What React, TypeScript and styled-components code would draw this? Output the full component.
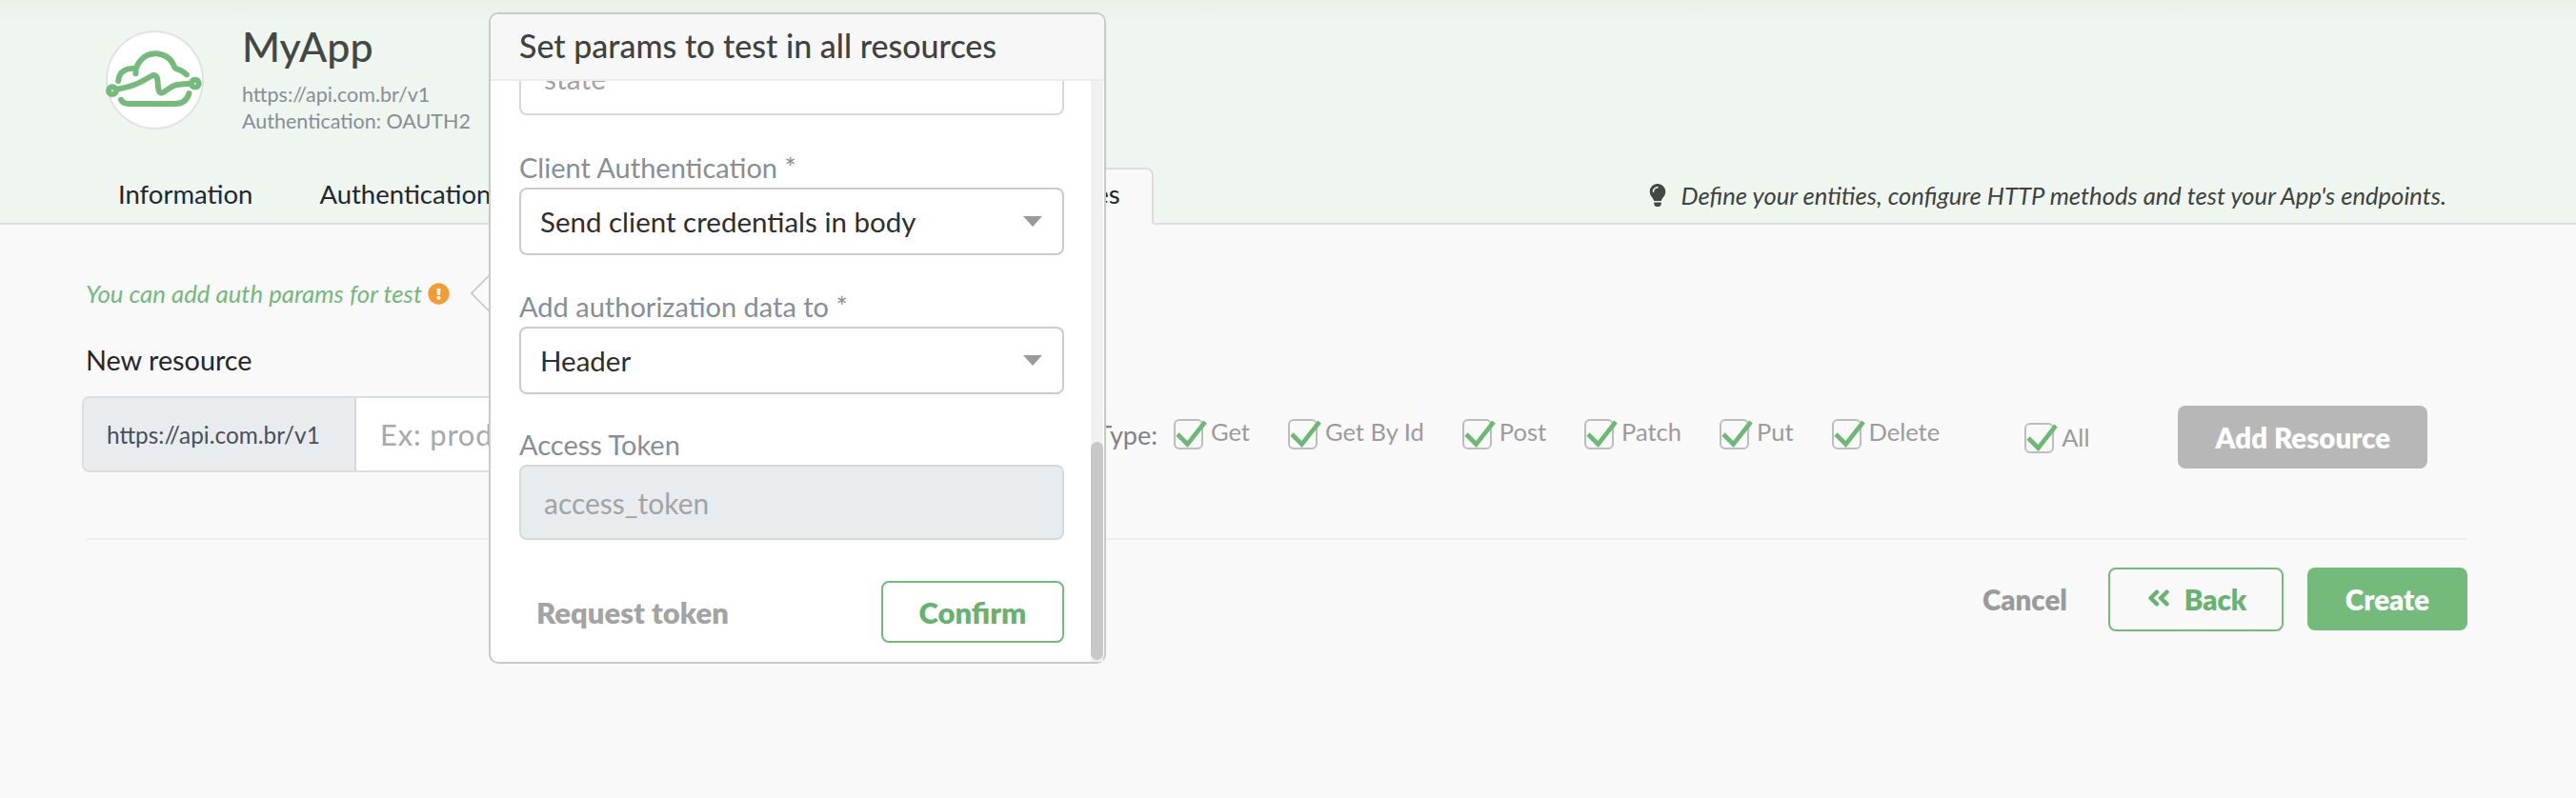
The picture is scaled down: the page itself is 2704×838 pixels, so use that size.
import React from "react";
import styled, { createGlobalStyle } from "styled-components";
import { FaAngleDoubleLeft, FaExclamationCircle, FaLightbulb } from "react-icons/fa";

const Global = createGlobalStyle`
  html, body { margin: 0; padding: 0; background: #f9f9f9; }
  * { box-sizing: border-box; }
`;

const Page = styled.div`
  position: relative;
  width: 2704px;
  height: 838px;
  overflow: hidden;
  background: #f9f9f9;
  font-family: Lato, "Open Sans", sans-serif;
`;

const Header = styled.header`
  height: 236px;
  display: flex;
  flex-direction: column;
  background: linear-gradient(#e9f1e9 0, #eff5ef 24px);
  border-bottom: 2px solid #dddddd;
`;

const Brand = styled.div`
  display: flex;
  padding: 32px 0 0 111px;
`;

const LogoCircle = styled.div`
  width: 103px;
  height: 104px;
  border-radius: 50%;
  background: #fff;
  border: 2px solid #e2e2e2;
  flex: none;
`;

const BrandText = styled.div`
  margin-left: 40px;
  display: flex;
  flex-direction: column;
`;

const Title = styled.h1`
  margin: -7px 0 0;
  font-size: 43px;
  line-height: 48px;
  font-weight: 500;
  color: #444844;
`;

const Meta = styled.div`
  font-size: 21.5px;
  line-height: 28px;
  color: #868e96;
  &:first-of-type { margin-top: 12px; }
`;

const TabRow = styled.nav`
  margin-top: auto;
  display: flex;
  align-items: flex-end;
  padding-left: 89px;
  padding-right: 136px;
  margin-bottom: -2px;
`;

const Tab = styled.div<{ $active?: boolean; $offset?: number }>`
  height: 60px;
  padding: 0 33px;
  font-size: 27.5px;
  line-height: 52px;
  color: #23272b;
  margin-left: ${(p) => p.$offset ?? 0}px;
  border: 2px solid ${(p) => (p.$active ? "#dddddd" : "transparent")};
  border-bottom-color: ${(p) => (p.$active ? "#f9f9f9" : "transparent")};
  border-radius: 8px 8px 0 0;
  background: ${(p) => (p.$active ? "#f9f9f9" : "transparent")};
`;

const Hint = styled.div`
  margin-left: auto;
  height: 60px;
  padding-bottom: 2px;
  display: flex;
  align-items: center;
  gap: 14px;
  font-size: 25.6px;
  font-style: italic;
  color: #3e423e;
  svg { color: #444844; width: 20px; height: 24px; }
`;

const Main = styled.main`
  padding: 57px 114px 0 86px;
`;

const Note = styled.div`
  display: flex;
  align-items: center;
  gap: 6px;
  padding-left: 4px;
  height: 30px;
  font-size: 25.8px;
  font-style: italic;
  color: #72b97a;
  svg { color: #f39c35; width: 23px; height: 23px; }
`;

const SectionLabel = styled.div`
  margin-top: 38px;
  padding-left: 4px;
  font-size: 28.8px;
  line-height: 34px;
  color: #23272b;
`;

const ResourceRow = styled.div`
  margin-top: 21px;
  display: flex;
  align-items: center;
  height: 80px;
`;

const InputGroup = styled.div`
  width: 950px;
  height: 80px;
  display: flex;
  border: 2px solid #dcdfe1;
  border-radius: 8px;
  overflow: hidden;
  flex: none;
`;

const Prefix = styled.div`
  width: 286px;
  flex: none;
  padding-left: 24px;
  display: flex;
  align-items: center;
  background: #e9ecef;
  border-right: 2px solid #d4d6d8;
  font-size: 24.4px;
  color: #495057;
`;

const PathInput = styled.input`
  flex: 1;
  min-width: 0;
  border: 0;
  background: #fff;
  padding-left: 25px;
  font-family: Lato, sans-serif;
  font-size: 31px;
  letter-spacing: 0.8px;
  &::placeholder { color: #a8a8a8; }
`;

const TypeLabel = styled.div`
  margin-left: 14px;
  width: 165px;
  flex: none;
  white-space: nowrap;
  font-size: 27px;
  color: #7d8389;
  text-align: right;
`;

const Checks = styled.div`
  margin-left: 17px;
  display: flex;
  gap: 40px;
  flex: none;
  margin-top: -1px;
`;

const CheckItem = styled.label<{ $lower?: boolean }>`
  display: flex;
  align-items: center;
  gap: 8px;
  font-size: 25.5px;
  line-height: 30px;
  white-space: nowrap;
  color: #9b9b9b;
  margin-left: ${(p) => (p.$lower ? 49 : 0)}px;
  transform: translateY(${(p) => (p.$lower ? 4 : 0)}px);
  & > span:last-child { transform: translateY(${(p) => (p.$lower ? -1 : -3)}px); }
`;

const Box = styled.span`
  position: relative;
  width: 31px;
  height: 32px;
  flex: none;
  border: 2px solid #bdbdbd;
  border-radius: 6px;
  svg { position: absolute; left: -2px; top: -2px; overflow: visible; }
`;

const AddButton = styled.button`
  margin-left: 93px;
  margin-top: 6px;
  width: 262px;
  height: 66px;
  flex: none;
  border: 0;
  border-radius: 8px;
  background: #b7b7b7;
  color: #fff;
  font-family: Lato, sans-serif;
  font-weight: 800;
  font-size: 29.5px;
`;

const Rule = styled.hr`
  margin: 69px 0 0 4px;
  border: 0;
  border-top: 2px solid #eceef0;
`;

const Actions = styled.div`
  margin-top: 29px;
  display: flex;
  justify-content: flex-end;
  align-items: flex-start;
`;

const CancelButton = styled.button`
  border: 0;
  background: transparent;
  padding: 0;
  margin-right: 43px;
  height: 66px;
  color: #9b9b9b;
  font-family: Lato, sans-serif;
  font-weight: 800;
  font-size: 29.5px;
`;

const BackButton = styled.button`
  width: 184px;
  height: 67px;
  margin-right: 25px;
  border: 2px solid #74ba7b;
  border-radius: 8px;
  background: transparent;
  color: #68b271;
  font-family: Lato, sans-serif;
  font-weight: 800;
  font-size: 29.5px;
  display: flex;
  align-items: center;
  justify-content: center;
  gap: 13px;
  svg { width: 28px; height: 28px; margin-top: -4px; }
`;

const CreateButton = styled.button`
  width: 168px;
  height: 66px;
  border: 0;
  border-radius: 8px;
  background: #74ba7b;
  color: #fff;
  font-family: Lato, sans-serif;
  font-weight: 800;
  font-size: 29.5px;
`;

const Popover = styled.aside`
  position: absolute;
  left: 513px;
  top: 13px;
  width: 648px;
  height: 684px;
  display: flex;
  flex-direction: column;
  background: #fff;
  border: 2px solid #c6cbc6;
  border-radius: 10px;
`;

const Arrow = styled.div`
  position: absolute;
  left: -16px;
  top: 279px;
  width: 28px;
  height: 28px;
  transform: rotate(45deg);
  background: #fafafa;
  border-left: 2px solid #c6cbc6;
  border-bottom: 2px solid #c6cbc6;
  clip-path: polygon(0 0, 100% 100%, 0 100%);
`;

const PopoverHead = styled.div`
  height: 70px;
  flex: none;
  padding: 0 0 4px 30px;
  display: flex;
  align-items: center;
  background: #f7f7f7;
  border-bottom: 2px solid #ececec;
  border-radius: 8px 8px 0 0;
  font-size: 34px;
  font-weight: 500;
  color: #3f4240;
`;

const PopoverBody = styled.div`
  flex: 1;
  min-height: 0;
  display: flex;
  overflow: hidden;
`;

const Form = styled.div`
  flex: 1;
  min-width: 0;
  padding: 0 28px 0 30px;
  margin-top: -43px;
  display: flex;
  flex-direction: column;
`;

const FieldLabel = styled.div<{ $gap: number }>`
  margin-top: ${(p) => p.$gap}px;
  height: 34px;
  margin-bottom: 4px;
  font-size: 29px;
  line-height: 34px;
  color: #868e96;
`;

const TextField = styled.div<{ $disabled?: boolean }>`
  height: 79px;
  padding-left: 24px;
  display: flex;
  align-items: center;
  flex: none;
  border: 2px solid #d8d8d8;
  border-radius: 8px;
  background: ${(p) => (p.$disabled ? "#e9ecef" : "#fff")};
  font-size: 30px;
  color: #a3a3a3;
`;

const SelectField = styled.div`
  height: 71px;
  flex: none;
  padding: 0 22px 0 20px;
  display: flex;
  align-items: center;
  justify-content: space-between;
  border: 2px solid #cbcbcb;
  border-radius: 8px;
  font-size: 29.5px;
  color: #2c2e30;
  &::after {
    content: "";
    border-left: 10px solid transparent;
    border-right: 10px solid transparent;
    border-top: 11px solid #9a9a9a;
    margin-right: -1px;
  }
`;

const FormActions = styled.div`
  margin-top: 43px;
  display: flex;
  justify-content: space-between;
  align-items: center;
`;

const RequestButton = styled.button`
  margin-left: 18px;
  border: 0;
  padding: 0;
  background: transparent;
  color: #a3a3a3;
  font-family: Lato, sans-serif;
  font-weight: 800;
  font-size: 31px;
`;

const ConfirmButton = styled.button`
  width: 192px;
  height: 65px;
  border: 2px solid #74ba7b;
  border-radius: 8px;
  background: #fff;
  color: #68b271;
  font-family: Lato, sans-serif;
  font-weight: 800;
  font-size: 31px;
`;

const ScrollTrack = styled.div`
  width: 13px;
  margin-right: 1px;
  flex: none;
  display: flex;
  padding-bottom: 2px;
  background: #f1f1f1;
`;

const ScrollThumb = styled.div`
  width: 100%;
  height: 229px;
  margin-top: auto;
  border-radius: 7px;
  background: #c8c8c8;
`;

const LogoMark = () => (
  <svg width="103" height="104" viewBox="0 0 104 104" fill="none" stroke="#74ba7b" strokeWidth="6" strokeLinecap="round" strokeLinejoin="round" style={{ display: "block", margin: -2, overflow: "visible" }}>
    <path d="M13.3 53C14 46 18 41.5 24 40.2c2.5-.5 5-.5 6.7-.3M31.7 45.3c-.5-10 8-21 20.6-21.3 8.5-.2 16.5 4.5 19.5 12 .5 1.5 1.2 2.8 2.2 3.7 4 1 8.5 3.5 11.7 6.6" />
    <path d="M11 62c6-1.2 12-2.5 18-4.5 7.5-2.5 13-6 19-9.5 3-1.7 5.5-1.5 6.5 2 1 4 .5 8 1.5 12.5 1 3.5 3 3.8 5.5 2.3 4.5-2.8 7.5-5.8 12.5-7.3 5-1.3 10-1.3 16-1.7" />
    <circle cx="7" cy="63.3" r="4" fill="#fff" />
    <circle cx="94.7" cy="55.7" r="4" fill="#fff" />
    <path d="M16.3 73c1.5 3.2 4 4.3 8 4.3h49c7 0 12.5-2.5 15-11" />
  </svg>
);

const CheckMark = () => (
  <svg width="31" height="32" viewBox="0 0 31 32" fill="none" stroke="#6cb975" strokeWidth="4.6">
    <path d="M4 16l10.5 10.5L33 3" />
  </svg>
);

const methods = ["Get", "Get By Id", "Post", "Patch", "Put", "Delete"];

export default function App() {
  return (
    <Page>
      <Global />
      <Header>
        <Brand>
          <LogoCircle><LogoMark /></LogoCircle>
          <BrandText>
            <Title>MyApp</Title>
            <Meta>https://api.com.br/v1</Meta>
            <Meta>Authentication: OAUTH2</Meta>
          </BrandText>
        </Brand>
        <TabRow>
          <Tab>Information</Tab>
          <Tab>Authentication</Tab>
          <Tab $active $offset={468}>Resources</Tab>
          <Hint>
            <FaLightbulb />
            <span>Define your entities, configure HTTP methods and test your App's endpoints.</span>
          </Hint>
        </TabRow>
      </Header>
      <Main>
        <Note>
          <span>You can add auth params for test</span>
          <FaExclamationCircle />
        </Note>
        <SectionLabel>New resource</SectionLabel>
        <ResourceRow>
          <InputGroup>
            <Prefix>https://api.com.br/v1</Prefix>
            <PathInput placeholder="Ex: products" readOnly />
          </InputGroup>
          <TypeLabel>Method Type:</TypeLabel>
          <Checks>
            {methods.map((m) => (
              <CheckItem key={m}>
                <Box><CheckMark /></Box>
                <span>{m}</span>
              </CheckItem>
            ))}
            <CheckItem $lower>
              <Box><CheckMark /></Box>
              <span>All</span>
            </CheckItem>
          </Checks>
          <AddButton>Add Resource</AddButton>
        </ResourceRow>
        <Rule />
        <Actions>
          <CancelButton>Cancel</CancelButton>
          <BackButton><FaAngleDoubleLeft />Back</BackButton>
          <CreateButton>Create</CreateButton>
        </Actions>
      </Main>
      <Popover>
        <Arrow />
        <PopoverHead>Set params to test in all resources</PopoverHead>
        <PopoverBody>
          <Form>
            <TextField>state</TextField>
            <FieldLabel $gap={38}>Client Authentication *</FieldLabel>
            <SelectField>Send client credentials in body</SelectField>
            <FieldLabel $gap={37}>Add authorization data to *</FieldLabel>
            <SelectField>Header</SelectField>
            <FieldLabel $gap={36}>Access Token</FieldLabel>
            <TextField $disabled>access_token</TextField>
            <FormActions>
              <RequestButton>Request token</RequestButton>
              <ConfirmButton>Confirm</ConfirmButton>
            </FormActions>
          </Form>
          <ScrollTrack><ScrollThumb /></ScrollTrack>
        </PopoverBody>
      </Popover>
    </Page>
  );
}
